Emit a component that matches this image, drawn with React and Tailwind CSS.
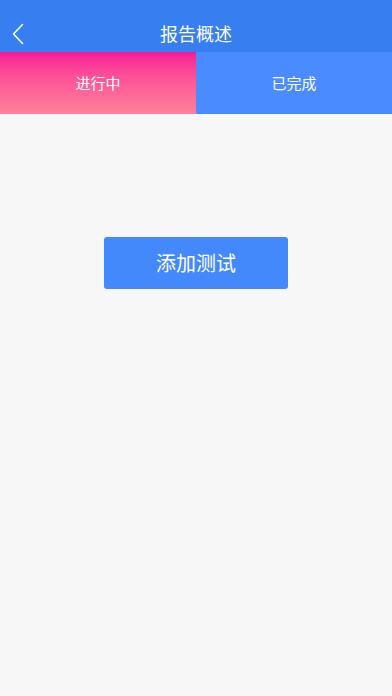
export default function App() {
  const font = { fontFamily: '"Noto Sans CJK SC", "Noto Sans", sans-serif' };
  return (
    <div className="w-[392px] h-[696px] bg-[#f7f7f7] flex flex-col" style={font}>
      <div className="h-[52px] bg-[#377ef0] flex items-center relative">
        <svg className="absolute left-[12px] top-[23px]" width="12" height="22" viewBox="0 0 12 22" fill="none">
          <path d="M10.5 1.5 L1.5 11 L10.5 20.5" stroke="white" strokeWidth="1.6" strokeLinecap="round" strokeLinejoin="round" />
        </svg>
        <div className="flex-1 text-center text-white text-[18px] pt-[14px] leading-[38px]">报告概述</div>
      </div>
      <div className="h-[62px] flex">
        <div className="w-[196px] bg-gradient-to-b from-[#f81595] to-[#ff8199] flex items-center justify-center text-white text-[15px]">进行中</div>
        <div className="flex-1 bg-[#4a8bff] flex items-center justify-center text-white text-[15px]">已完成</div>
      </div>
      <div className="flex justify-center pt-[123px]">
        <div className="w-[184px] h-[52px] bg-[#4489fb] rounded-[3px] flex items-center justify-center text-white text-[20px]">添加测试</div>
      </div>
    </div>
  );
}
